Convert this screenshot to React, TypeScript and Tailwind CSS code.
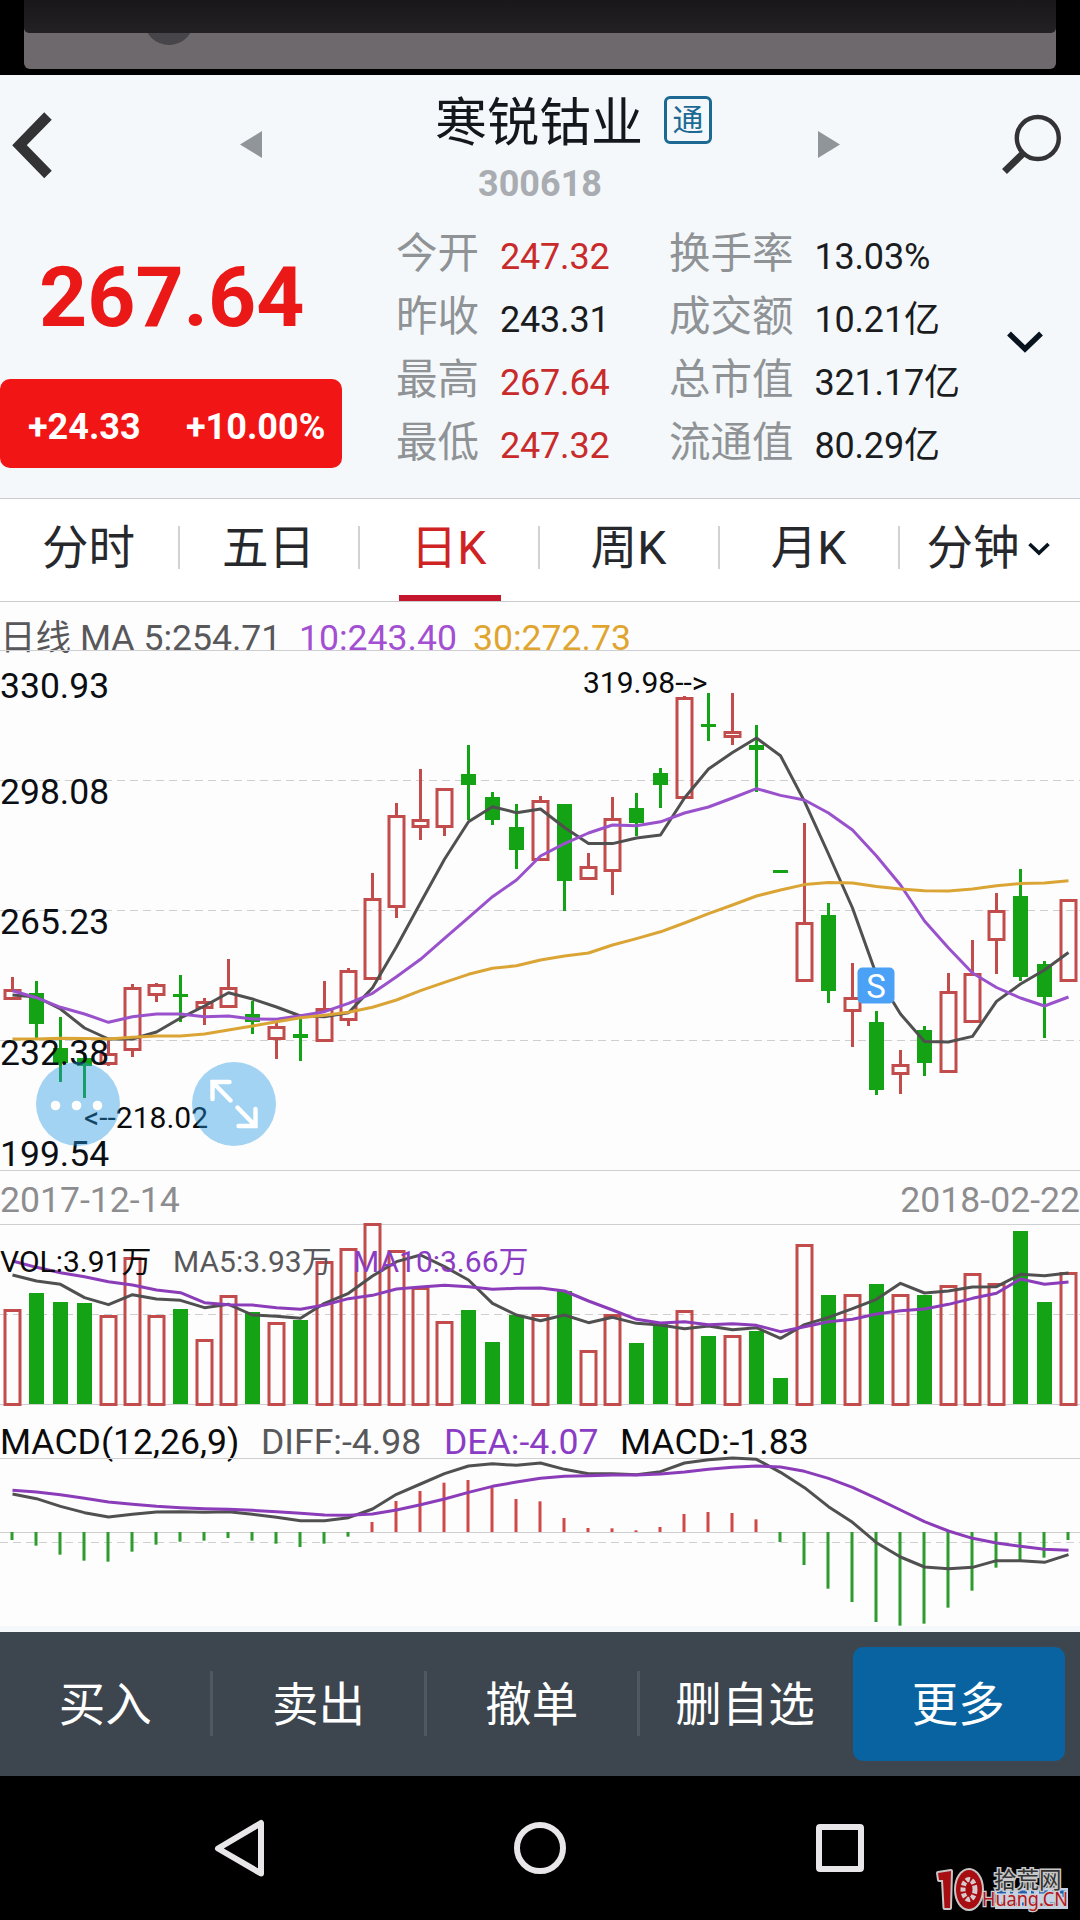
import { clsx } from 'clsx';

const FONT = "font-[Roboto,'Noto_Sans_CJK_SC',sans-serif]";

const RED = '#c24c4b';
const GREEN = '#14a314';
const GREY = '#505050';
const PURPLE = '#9a52cc';
const VIOLET = '#8b3cb8';
const ORANGE = '#dba536';

// [rising, high, body top, body bottom, low]
type Candle = [number, number, number, number, number];

const candles: Candle[] = [
  [1, 977, 989, 1000, 1000], [0, 981, 993, 1024, 1040], [0, 1017, 1048, 1063, 1082],
  [0, 1053, 1058, 1066, 1098], [1, 1040, 1053, 1065, 1066], [1, 984, 987, 1051, 1057],
  [1, 983, 984, 996, 1002], [0, 975, 994, 997, 1022], [1, 998, 1001, 1009, 1025],
  [1, 959, 987, 1008, 1008], [0, 1001, 1014, 1022, 1034], [1, 1023, 1026, 1040, 1059],
  [0, 1018, 1034, 1038, 1061], [1, 981, 1008, 1042, 1042], [1, 968, 970, 1021, 1026],
  [1, 873, 898, 980, 980], [1, 803, 815, 908, 918], [1, 769, 819, 828, 840],
  [1, 788, 788, 828, 836], [0, 745, 774, 785, 820], [0, 792, 797, 820, 825],
  [0, 804, 827, 850, 869], [1, 796, 800, 861, 861], [0, 804, 804, 881, 911],
  [1, 853, 866, 880, 880], [1, 797, 818, 872, 895], [0, 793, 808, 823, 836],
  [0, 768, 773, 785, 808], [1, 696, 697, 799, 799], [0, 693, 724, 727, 741],
  [1, 693, 731, 738, 745], [0, 725, 745, 750, 792], [0, 870, 870, 873, 873],
  [1, 823, 922, 982, 982], [0, 903, 915, 991, 1003], [1, 963, 997, 1012, 1047],
  [0, 1011, 1022, 1090, 1095], [1, 1050, 1064, 1075, 1094], [0, 1026, 1030, 1063, 1076],
  [1, 973, 991, 1073, 1073], [1, 940, 973, 1023, 1023], [1, 893, 910, 941, 974],
  [0, 869, 896, 977, 981], [0, 961, 964, 997, 1038], [1, 899, 899, 982, 982],
];

const ma5 = [
  995, 997, 1009, 1028, 1039, 1039, 1032, 1018, 1006, 992.7, 999, 1007, 1016, 1016.7, 1012.7,
  987.7, 946.7, 902.7, 859.3, 821.7, 806.7, 812.7, 809, 827.5, 843.6, 843.6, 838, 835, 798, 769,
  752.5, 738, 755.7, 801.4, 854, 908, 975, 1014, 1041.4, 1042, 1036.4, 1001.4, 984, 970, 952.5,
];
const ma10 = [
  990.7, 997.7, 1007.3, 1014, 1022.3, 1016.7, 1014, 1014, 1016.7, 1016, 1019, 1019.3, 1015.7,
  1011.7, 1003.3, 993.3, 976.7, 959.3, 938.3, 917.7, 896.7, 880, 856, 843.6, 833, 825, 825.7,
  821.8, 813, 807, 798, 788.6, 795.4, 800, 813, 830, 856, 885, 921, 948, 973, 987.5, 998, 1006, 997,
];
const ma30 = [
  1039, 1039, 1038.3, 1038.6, 1039, 1037.3, 1036, 1036, 1034, 1030, 1026, 1021.7, 1017.7, 1015.3,
  1012.3, 1007.3, 1000, 990.7, 982.3, 974.3, 968.3, 965.7, 960, 956, 953, 945, 938.6, 931.8, 923,
  913.6, 905, 896, 890, 884.6, 882.5, 883, 886.4, 889, 890.7, 891, 889, 885.7, 883.6, 883, 880.7,
];

const volume = [
  1309, 1293, 1302, 1303, 1315, 1257, 1315, 1309, 1339, 1295, 1312, 1322, 1320, 1261, 1248, 1223,
  1250, 1287, 1321, 1310, 1342, 1315, 1314, 1291, 1350, 1314, 1343, 1324, 1310, 1336, 1335, 1331,
  1378, 1244, 1295, 1294, 1284, 1294, 1295, 1285, 1273, 1283, 1231, 1302, 1272,
];
// indicator series are stored in thirds of a pixel below y = 1190
const volMa5 = [
  255, 273, 283, 323, 344, 314, 327, 331, 353, 343, 375, 379, 385, 340, 310, 258, 215, 195, 230,
  270, 340, 375, 392, 375, 398, 382, 400, 405, 416, 408, 419, 413, 445, 404, 382, 356, 328, 280,
  309, 303, 291, 290, 253, 257, 249,
];
const volMa10 = [
  213, 232, 248, 260, 275, 285, 300, 308, 338, 344, 345, 353, 358, 345, 326, 316, 297, 291, 286,
  290, 298, 295, 294, 303, 333, 360, 388, 399, 395, 404, 401, 406, 425, 410, 395, 388, 372, 362,
  357, 343, 325, 310, 267, 283, 276,
];
const macd = [
  1050, 1067, 1094, 1112, 1115, 1085, 1064, 1055, 1052, 1044, 1052, 1061, 1071, 1061, 1040, 996,
  933, 903, 878, 870, 892, 927, 934, 984, 1014, 1015, 1021, 1011, 972, 966, 969, 988, 1056, 1125,
  1196, 1236, 1296, 1307, 1301, 1253, 1202, 1133, 1110, 1103, 1050,
];
const diff = [
  912, 926, 949, 968, 981, 973, 966, 965, 967, 965, 973, 982, 992, 992, 983, 957, 913, 882, 851,
  828, 821, 826, 819, 838, 851, 851, 854, 845, 819, 809, 804, 808, 847, 893, 950, 997, 1058, 1101,
  1131, 1136, 1132, 1112, 1112, 1117, 1094,
];
const dea = [
  901, 906, 914, 925, 936, 943, 949, 953, 956, 958, 961, 965, 970, 975, 976, 972, 960, 944, 927,
  907, 889, 876, 865, 859, 857, 855, 855, 852, 846, 838, 832, 828, 831, 844, 865, 892, 925, 960,
  995, 1023, 1045, 1059, 1069, 1078, 1081,
];

const cx = (i: number) => 12.5 + 24 * i;
const third = (v: number) => 1190 + v / 3;
const identity = (v: number) => v;

function Series({ values, color, toY = identity }: { values: number[]; color: string; toY?: (v: number) => number }) {
  const points = values.map((v, i) => `${cx(i)},${toY(v)}`).join(' ');
  return <polyline points={points} fill="none" stroke={color} strokeWidth={3} strokeLinejoin="round" />;
}

function Rule({ y, dashed }: { y: number; dashed?: boolean }) {
  return (
    <line x1={0} x2={1080} y1={y} y2={y} stroke="#cfcfd1" strokeWidth={1.2} strokeDasharray={dashed ? '8 5' : undefined} />
  );
}

function PriceChart() {
  const labels: [string, number][] = [
    ['330.93', 697.5],
    ['298.08', 803.5],
    ['265.23', 933.5],
    ['232.38', 1064.5],
    ['199.54', 1166],
  ];

  return (
    <svg className="block h-[522px] w-full overflow-visible" viewBox="0 650 1080 522">
      <Rule y={650.5} />
      <Rule y={780.5} dashed />
      <Rule y={910.5} dashed />
      <Rule y={1040.5} dashed />
      <Rule y={1170.5} />
      {candles.map(([up, high, top, bottom, low], i) =>
        up ? (
          <g key={i} stroke={RED} strokeWidth={3} fill="none">
            <path d={`M${cx(i)} ${high}V${top + 1.5}M${cx(i)} ${bottom - 1.5}V${low}`} />
            <rect x={cx(i) - 7.5} y={top + 1.5} width={15} height={bottom - top - 3} />
          </g>
        ) : (
          <g key={i} fill={GREEN}>
            <rect x={cx(i) - 1.5} y={high} width={3} height={low - high} />
            <rect x={cx(i) - 7.5} y={top} width={15} height={bottom - top} />
          </g>
        ),
      )}
      <Series values={ma5} color={GREY} />
      <Series values={ma10} color={PURPLE} />
      <Series values={ma30} color={ORANGE} />
      <g fontSize={35.5} fill="#0b0f14">
        {labels.map(([text, y]) => (
          <text key={text} x={0} y={y}>
            {text}
          </text>
        ))}
      </g>
      <g fontSize={30} fill="#0b0b0b">
        <text x={583} y={693}>{'319.98-->'}</text>
        <text x={84} y={1127.5}>{'<--218.02'}</text>
      </g>

      {/* sell marker */}
      <rect x={857.5} y={967.5} width={37} height={36} rx={5} fill="#4aa1f5" />
      <text x={876} y={998} fontSize={33} textAnchor="middle" fill="#fff">
        S
      </text>

      {/* floating buttons */}
      <g fill="#2297e3" fillOpacity={0.41}>
        <circle cx={78} cy={1104} r={42} />
        <circle cx={234} cy={1104} r={42} />
      </g>
      <g fill="#fff">
        <circle cx={55.5} cy={1105.5} r={4.8} />
        <circle cx={76.5} cy={1105.5} r={4.8} />
        <circle cx={97.5} cy={1105.5} r={4.8} />
      </g>
      <path
        d="M229.5 1082H212.5V1099M212.5 1082L230.5 1100.5M238.5 1126H255.5V1109M255.5 1126L237.5 1107.5"
        fill="none"
        stroke="#fff"
        strokeWidth={4.4}
        strokeLinecap="round"
      />
    </svg>
  );
}

function VolumeChart() {
  return (
    <svg className="block h-[186px] w-full" viewBox="0 1221 1080 186">
      <Rule y={1224.5} />
      <Rule y={1314.5} dashed />
      <Rule y={1404.5} />
      {volume.map((y, i) =>
        candles[i][0] ? (
          <rect key={i} x={cx(i) - 7.5} y={y + 1.5} width={15} height={1404.5 - y - 1.5} fill="none" stroke={RED} strokeWidth={3} />
        ) : (
          <rect key={i} x={cx(i) - 7.5} y={y} width={15} height={1404 - y} fill={GREEN} />
        ),
      )}
      <Series values={volMa5} color={GREY} toY={third} />
      <Series values={volMa10} color={VIOLET} toY={third} />
      <g fontSize={30}>
        <text x={0} y={1272} fill="#0b0b0b">VOL:3.91万</text>
        <text x={173} y={1272} fill="#58585a">MA5:3.93万</text>
        <text x={353} y={1272} fill="#8b3cc4">MA10:3.66万</text>
      </g>
    </svg>
  );
}

function MacdChart() {
  const zero = 1532;
  return (
    <svg className="block h-[170px] w-full" viewBox="0 1456 1080 170">
      <Rule y={1458.5} />
      <Rule y={1532.5} />
      <Rule y={1542.5} dashed />
      {macd.map((v, i) => {
        const end = third(v);
        return (
          <rect
            key={i}
            x={cx(i) - 2}
            y={Math.min(zero, end)}
            width={3}
            height={Math.abs(end - zero)}
            fill={end < zero ? '#d04848' : '#2c9c2c'}
          />
        );
      })}
      <Series values={diff} color={GREY} toY={third} />
      <Series values={dea} color={VIOLET} toY={third} />
    </svg>
  );
}

function StatusStrip() {
  return (
    <div className="h-[75px] bg-black px-6">
      <div className="relative h-[69px] overflow-hidden rounded-b-[6px] bg-[#6d696d]">
        <div className="absolute top-[-5px] left-[120px] size-[50px] rounded-full bg-[#48454a]" />
        <div className="relative h-[33px] rounded-b-[5px] bg-linear-to-b from-[#1a171b] to-[#242125]" />
      </div>
    </div>
  );
}

function Header() {
  return (
    <div className="flex h-[144px] items-start justify-between">
      <svg className="mt-[34px] ml-[10px] h-[72px] w-[44px]" viewBox="10 109 44 72">
        <path d="M48 116L19.5 145.2L48 174.5" fill="none" stroke="#333336" strokeWidth={10.5} />
      </svg>
      <svg className="mt-[56px] ml-[186px] h-[27px] w-[22px]" viewBox="0 0 22 27">
        <path d="M0 13.5L22 0V27Z" fill="#8f9598" />
      </svg>
      <div className="flex w-[556px] flex-col items-center">
        <div className="mt-[20px] ml-[67px] flex h-[50px] items-center gap-[21px]">
          <h1 className="mt-[7px] text-[52px] leading-none text-[#14171c]">寒锐钴业</h1>
          <span className="flex size-[48px] items-center justify-center rounded-[6px] border-3 border-[#1c6a94] text-[31px] leading-none text-[#1c6a94]">
            通
          </span>
        </div>
        <div className="mt-[18px] text-[36px] leading-[42px] font-bold text-[#a9acb0]">300618</div>
      </div>
      <svg className="mt-[56px] h-[27px] w-[22px]" viewBox="0 0 22 27">
        <path d="M22 13.5L0 0V27Z" fill="#8f9598" />
      </svg>
      <svg className="mt-[35px] mr-[15px] ml-[160px] h-[70px] w-[65px]" viewBox="1000 110 65 70">
        <circle cx={1037.8} cy={138} r={21} fill="none" stroke="#333336" strokeWidth={4.4} />
        <path d="M1024 152.5L1004.5 171.5" stroke="#333336" strokeWidth={7} />
      </svg>
    </div>
  );
}

function Stat({ label, value, up }: { label: string; value: string; up?: boolean }) {
  return (
    <div className="flex h-[63px] items-center">
      <span className="mt-[6px] text-[41.5px] leading-none text-[#8f9396]">{label}</span>
      <span
        className={clsx(
          'mt-[12px] ml-[21px] text-[36px] leading-none tracking-[-0.2px]',
          up ? 'text-[#c92b2b]' : 'text-[#1a1c20]',
        )}
      >
        {value}
      </span>
    </div>
  );
}

function Quote() {
  return (
    <div className="flex h-[279px]">
      <div className="w-[342px]">
        <div className="mt-[30px] h-[98px] pl-[39px] text-[84px] leading-[98px] font-bold text-[#eb1818]">267.64</div>
        <div className="mt-[32px] flex h-[89px] items-center rounded-[10px] bg-[#f21515] pt-[7px] pl-[28px] text-[36px] font-bold text-white">
          <span className="w-[158px]">+24.33</span>
          <span>+10.00%</span>
        </div>
      </div>
      <div className="ml-[54px] w-[273px]">
        <Stat label="今开" value="247.32" up />
        <Stat label="昨收" value="243.31" />
        <Stat label="最高" value="267.64" up />
        <Stat label="最低" value="247.32" up />
      </div>
      <div className="w-[330px]">
        <Stat label="换手率" value="13.03%" />
        <Stat label="成交额" value="10.21亿" />
        <Stat label="总市值" value="321.17亿" />
        <Stat label="流通值" value="80.29亿" />
      </div>
      <svg className="mt-[110px] ml-[7px] h-[26px] w-[38px]" viewBox="0 0 38 26">
        <path d="M3 4.5L19 20L35 4.5" fill="none" stroke="#07131e" strokeWidth={5.5} />
      </svg>
    </div>
  );
}

const tabs = ['分时', '五日', '日K', '周K', '月K', '分钟'];

function Tabs() {
  return (
    <div className="flex h-[104px] border-y border-[#c9cbce] bg-white">
      {tabs.map((tab, i) => (
        <div
          key={tab}
          className={clsx(
            'relative flex h-full w-[180px] items-center justify-center pr-[3px] pb-[3px] text-[46.5px] leading-none',
            tab === '日K' ? 'text-[#cf2323]' : 'text-[#26282c]',
          )}
        >
          {i > 0 && <div className="absolute top-[27px] left-[-2px] h-[43px] w-[2px] bg-[#d2d2d4]" />}
          {tab}
          {tab === '分钟' && (
            <svg className="ml-[7px] h-[16px] w-[24px]" viewBox="0 0 24 16">
              <path d="M2.5 3L12 12L21.5 3" fill="none" stroke="#07131e" strokeWidth={3.6} />
            </svg>
          )}
          {tab === '日K' && <div className="absolute bottom-0 left-[39px] h-[6px] w-[102px] bg-[#c4162c]" />}
        </div>
      ))}
    </div>
  );
}

function ActionBar() {
  const actions = ['买入', '卖出', '撤单', '删自选'];
  return (
    <div className="flex h-[144px] items-center bg-[#3d464e] text-[46.5px] leading-none text-white">
      {actions.map((action, i) => (
        <div key={action} className="relative flex h-[65px] w-[213.3px] items-center justify-center pt-[2px] pr-[3px]">
          {action}
          {i < 3 && <div className="absolute top-[-1px] right-0 h-[65px] w-[3px] bg-[#4f5860]" />}
        </div>
      ))}
      <div className="flex h-[114px] w-[212px] items-center justify-center rounded-[10px] bg-[#0863a0] pt-[2px] pr-[2px]">
        更多
      </div>
    </div>
  );
}

function SiteMark() {
  return (
    <svg className="absolute right-0 bottom-0 h-[60px] w-[150px]" viewBox="0 0 150 60">
      <rect x={65} y={28} width={73} height={21} fill="#c4d2e6" />
      <path d="M67 32H134V44H67Z" fill="none" stroke="#1f5fae" strokeWidth={3} strokeDasharray="9 4 3 5" />
      <g stroke="#c9c5c6" strokeWidth={4} strokeLinejoin="round" paintOrder="stroke">
        <path d="M8 13L21 11L20 48H14.5L13 20L9 20Z" fill="#a80d12" />
        <ellipse cx={39} cy={29.5} rx={13} ry={19.5} fill="#a80d12" />
      </g>
      <ellipse cx={39} cy={29.5} rx={6} ry={10} fill="none" stroke="#d6cccd" strokeWidth={5} strokeDasharray="4 1.8" />
      <circle cx={39} cy={29.5} r={3} fill="#a80d12" />
      <text x={64} y={27.5} fontSize={22.5} fill="#333" stroke="#c8c8c8" strokeWidth={3} paintOrder="stroke">
        拾荒网
      </text>
      <text
        x={52}
        y={46}
        fontSize={19}
        textLength={86}
        lengthAdjust="spacingAndGlyphs"
        fill="#b3161d"
        stroke="#d0cfd2"
        strokeWidth={2.5}
        paintOrder="stroke"
        fontFamily="Noto Sans, sans-serif"
      >
        Huang.CN
      </text>
    </svg>
  );
}

function SystemNav() {
  return (
    <div className="relative flex h-[144px] items-center justify-center gap-[246px] bg-black">
      <svg className="h-[60px] w-[54px]" viewBox="0 0 54 60" fill="none" stroke="#e9e6e9" strokeWidth={6} strokeLinejoin="round">
        <path d="M5 30.5L48 5V55.5Z" />
      </svg>
      <svg className="h-[60px] w-[54px]" viewBox="0 0 54 60">
        <circle cx={27} cy={30} r={23} fill="none" stroke="#e9e6e9" strokeWidth={6} />
      </svg>
      <svg className="h-[60px] w-[54px]" viewBox="0 0 54 60">
        <rect x={6} y={9} width={42} height={42} rx={1} fill="none" stroke="#e9e6e9" strokeWidth={6} strokeLinejoin="round" />
      </svg>
      <SiteMark />
    </div>
  );
}

export default function App() {
  return (
    <div className={clsx('flex h-[1920px] w-[1080px] flex-col overflow-hidden bg-[#fdfdfe]', FONT)}>
      <StatusStrip />
      <div className="bg-[#f4f8fb]">
        <Header />
        <Quote />
      </div>
      <Tabs />
      <div className="flex h-[48px] items-end text-[35.6px] leading-[24px] whitespace-pre">
        <span className="w-[299px] text-[#58585a]">日线 MA 5:254.71</span>
        <span className="w-[174px] text-[#a34fd2]">10:243.40</span>
        <span className="text-[#e0a52f]">30:272.73</span>
      </div>
      <PriceChart />
      <div className="flex h-[49px] items-center justify-between pt-[8px] text-[35.6px] leading-none text-[#8d8d90]">
        <span>2017-12-14</span>
        <span>2018-02-22</span>
      </div>
      <VolumeChart />
      <div className="flex h-[49px] items-center pt-[22px] text-[35.6px] leading-none text-[#0b0b0b]">
        <span className="w-[261px]">MACD(12,26,9)</span>
        <span className="w-[183px] text-[#58585a]">DIFF:-4.98</span>
        <span className="w-[176px] text-[#8b3cc4]">DEA:-4.07</span>
        <span>MACD:-1.83</span>
      </div>
      <MacdChart />
      <div className="h-[6px] bg-[#f4f8fb]" />
      <ActionBar />
      <SystemNav />
    </div>
  );
}
